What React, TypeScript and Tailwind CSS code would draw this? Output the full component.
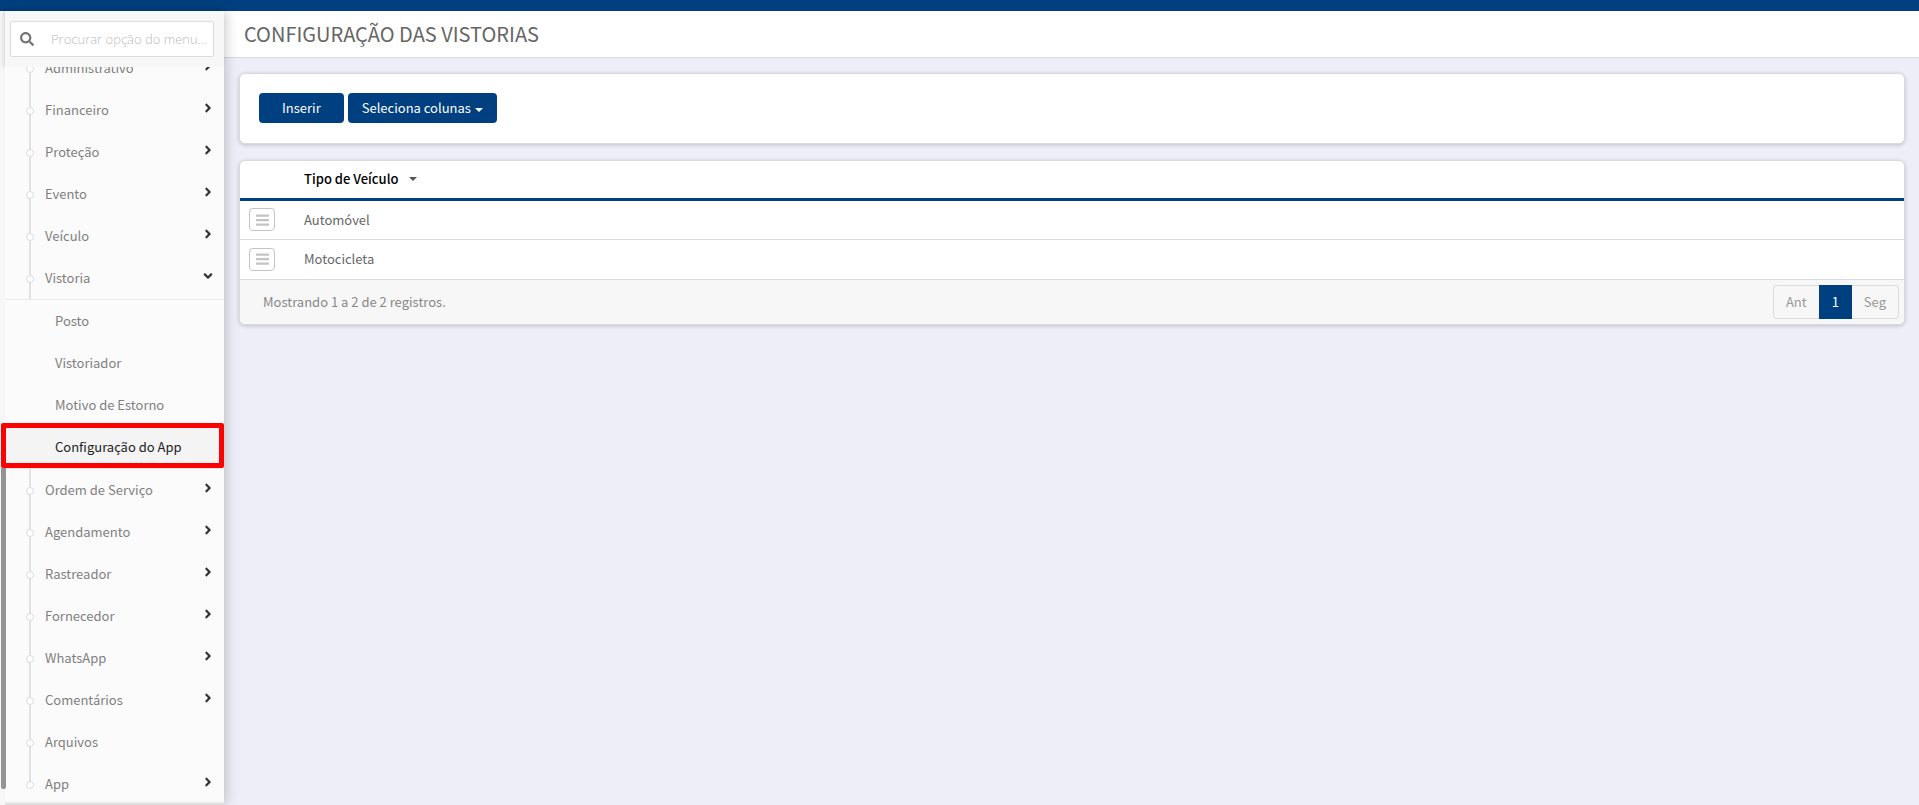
import { FaAngleDown, FaAngleRight, FaSearch } from "react-icons/fa";

const menu = [
  { label: "Administrativo", arrow: true },
  { label: "Financeiro", arrow: true },
  { label: "Proteção", arrow: true },
  { label: "Evento", arrow: true },
  { label: "Veículo", arrow: true },
  { label: "Vistoria", arrow: true, children: ["Posto", "Vistoriador", "Motivo de Estorno", "Configuração do App"] },
  { label: "Ordem de Serviço", arrow: true },
  { label: "Agendamento", arrow: true },
  { label: "Rastreador", arrow: true },
  { label: "Fornecedor", arrow: true },
  { label: "WhatsApp", arrow: true },
  { label: "Comentários", arrow: true },
  { label: "Arquivos", arrow: false },
  { label: "App", arrow: true },
];

const rows = ["Automóvel", "Motocicleta"];
const active = "Configuração do App";

function Caret({ className }: { className: string }) {
  return (
    <svg viewBox="0 0 8 4" className={className} fill="currentColor" aria-hidden="true">
      <path d="M0 0h8L4 4z" />
    </svg>
  );
}

function Bars() {
  return (
    <svg viewBox="0 0 13 12" className="h-3 w-[13px]" fill="currentColor" aria-hidden="true">
      <path d="M0 .5h13v2.2H0zM0 5h13v2.2H0zM0 9.5h13v2.2H0z" />
    </svg>
  );
}

function MenuItem({ item, last }: { item: (typeof menu)[number]; last: boolean }) {
  return (
    <li>
      <a href="#" className="relative flex h-[42px] items-center pl-10 pr-[9px] text-[#808080]">
        <span className={`absolute left-6 top-0 w-0.5 bg-[#e2e2e2] ${last ? "h-1/2" : "h-full"}`} />
        <span className="absolute left-[21px] top-[18px] size-2 rounded-full border border-[#dcdcdc] bg-white" />
        <span className="grow">{item.label}</span>
        {item.arrow &&
          (item.children ? (
            <FaAngleDown className="mb-1 size-3.5 text-[#333]" />
          ) : (
            <FaAngleRight className="mb-1 size-3.5 text-[#333]" />
          ))}
      </a>
      {item.children && (
        <ul className="border-y border-[#ebebeb]">
          {item.children.map((child) => (
            <li key={child} className="relative">
              <a
                href="#"
                className={`flex h-[42px] items-center pl-[50px] ${child === active ? "bg-[#f4f4f4] text-[#222]" : "text-[#808080]"}`}
              >
                {child}
              </a>
              {child === active && (
                <span className="absolute -left-1 -top-[3px] bottom-0 right-0 rounded-xs border-5 border-[#fe0000]" />
              )}
            </li>
          ))}
        </ul>
      )}
    </li>
  );
}

function Sidebar() {
  return (
    <aside className="relative z-10 flex w-56 shrink-0 flex-col bg-[#f7f7f7] shadow-[2px_0_12px_rgba(0,0,0,0.2)]">
      <div className="ml-[5px] bg-[#f7f7f7] py-2.5 pl-[5px] pr-2.5 shadow-[-2px_0_4px_rgba(0,0,0,0.12)]">
        <label className="flex h-9 items-center rounded-xs border border-[#dcdcdc] bg-white pl-[9px]">
          <FaSearch className="size-3.5 shrink-0 text-[#777]" />
          <input
            type="text"
            aria-label="Procurar opção do menu"
            placeholder="Procurar opção do menu..."
            className="ml-[17px] w-full min-w-0 font-['Open_Sans',sans-serif] text-[13px] font-light outline-none placeholder:text-[#bbb]"
          />
        </label>
      </div>
      <nav className="min-h-0 grow overflow-hidden pl-[5px]">
        <ul className="-mt-5 bg-[#fbfbfb]">
          {menu.map((item, i) => (
            <MenuItem key={item.label} item={item} last={i === menu.length - 1} />
          ))}
        </ul>
      </nav>
      <div className="absolute bottom-0 left-[5px] right-0 h-1 bg-linear-to-b from-transparent to-black/15" />
      <div className="absolute bottom-4 left-px top-[457px] w-[5px] rounded-b-xs bg-[#949494]" />
    </aside>
  );
}

export default function App() {
  return (
    <div className="flex h-screen flex-col overflow-hidden bg-[#eeeef8] font-['Noto_Sans_CJK_SC',sans-serif] text-[13px] leading-5">
      <div className="h-[11px] shrink-0 bg-[#004080]" />
      <div className="flex min-h-0 grow">
        <Sidebar />
        <main className="min-w-0 grow">
          <header className="flex h-[47px] items-center border-b border-[#d9d9de] bg-white pl-5">
            <h1 className="text-xl text-[#666]">CONFIGURAÇÃO DAS VISTORIAS</h1>
          </header>
          <div className="flex flex-col gap-4 py-[15px] pl-[15px] pr-3.5">
            <section className="flex gap-1 rounded-md border border-[#d9d9de] bg-white px-[19px] pb-5 pt-[19px] shadow-[0_1px_4px_rgba(0,0,0,0.2)]">
              <button className="h-[30px] rounded-sm bg-[#004080] px-[23px] text-white">Inserir</button>
              <button className="flex h-[30px] items-center gap-1 rounded-sm bg-[#004080] px-3.5 text-white">
                Seleciona colunas
                <Caret className="mt-1 h-1 w-2" />
              </button>
            </section>

            <section className="overflow-hidden rounded-md border border-[#d9d9de] bg-white shadow-[0_1px_4px_rgba(0,0,0,0.2)]">
              <table className="w-full text-left">
                <thead>
                  <tr className="h-[38px] border-b-3 border-[#004080]">
                    <th className="w-16" />
                    <th className="font-medium text-black">
                      <span className="flex items-center gap-2.5">
                        Tipo de Veículo
                        <Caret className="h-1 w-2 text-[#555]" />
                      </span>
                    </th>
                  </tr>
                </thead>
                <tbody>
                  {rows.map((row) => (
                    <tr key={row} className="h-10 border-b border-[#d9d9de]">
                      <td className="pl-[9px]">
                        <button
                          aria-label="Opções"
                          className="flex h-[23px] w-[26px] items-center justify-center rounded-sm border border-[#c4c4c4] text-[#c4c4c4]"
                        >
                          <Bars />
                        </button>
                      </td>
                      <td className="text-[#666]">{row}</td>
                    </tr>
                  ))}
                </tbody>
              </table>
              <footer className="flex items-center justify-between bg-[#f7f7f7] py-[5px] pl-[23px] pr-[5px] text-[#888]">
                <span>Mostrando 1 a 2 de 2 registros.</span>
                <div className="flex h-[34px] text-[#999]">
                  <button className="rounded-l-sm border border-r-0 border-[#dcdcdc] px-3">Ant</button>
                  <button className="bg-[#004080] px-[13px] text-white">1</button>
                  <button className="rounded-r-sm border border-l-0 border-[#dcdcdc] px-3">Seg</button>
                </div>
              </footer>
            </section>
          </div>
        </main>
      </div>
    </div>
  );
}
